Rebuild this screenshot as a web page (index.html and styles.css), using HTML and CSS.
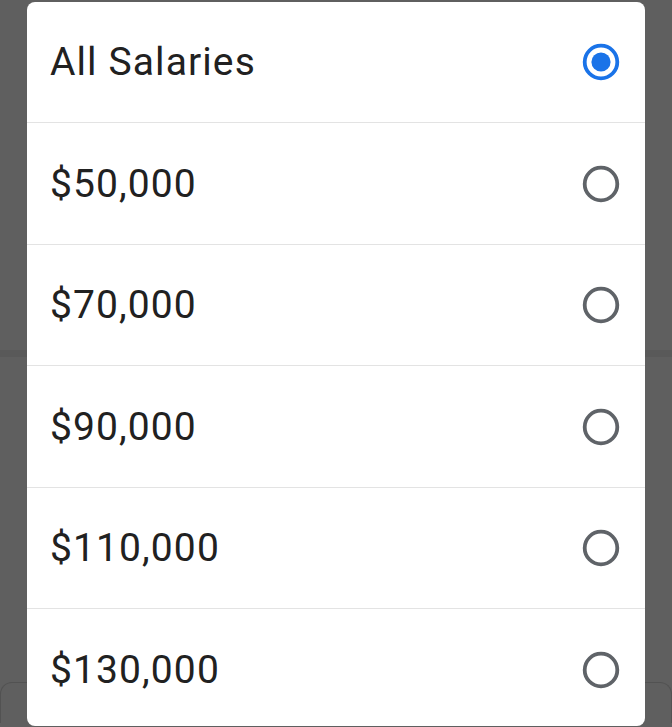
FILE: index.html
```html
<!DOCTYPE html>
<html lang="en">
<head>
<meta charset="utf-8">
<title>Salary filter</title>
<link rel="stylesheet" href="styles.css">
</head>
<body>
<div class="page">
  <div class="band"></div>
  <div class="field"></div>
</div>
<div class="dialog" role="radiogroup">
  <div class="row">
    <span class="label">All Salaries</span>
    <svg class="radio" viewBox="0 0 40 40" width="40" height="40"><circle cx="20" cy="20" r="16.3" fill="none" stroke="#1a73e8" stroke-width="3.8"/><circle cx="20" cy="20" r="9.6" fill="#1a73e8"/></svg>
  </div>
  <div class="row">
    <span class="label">$50,000</span>
    <svg class="radio" viewBox="0 0 40 40" width="40" height="40"><circle cx="20" cy="20" r="16.3" fill="none" stroke="#5f6368" stroke-width="3.8"/></svg>
  </div>
  <div class="row">
    <span class="label">$70,000</span>
    <svg class="radio" viewBox="0 0 40 40" width="40" height="40"><circle cx="20" cy="20" r="16.3" fill="none" stroke="#5f6368" stroke-width="3.8"/></svg>
  </div>
  <div class="row">
    <span class="label">$90,000</span>
    <svg class="radio" viewBox="0 0 40 40" width="40" height="40"><circle cx="20" cy="20" r="16.3" fill="none" stroke="#5f6368" stroke-width="3.8"/></svg>
  </div>
  <div class="row">
    <span class="label">$110,000</span>
    <svg class="radio" viewBox="0 0 40 40" width="40" height="40"><circle cx="20" cy="20" r="16.3" fill="none" stroke="#5f6368" stroke-width="3.8"/></svg>
  </div>
  <div class="row">
    <span class="label">$130,000</span>
    <svg class="radio" viewBox="0 0 40 40" width="40" height="40"><circle cx="20" cy="20" r="16.3" fill="none" stroke="#5f6368" stroke-width="3.8"/></svg>
  </div>
</div>
</body>
</html>
```

FILE: styles.css
```css
html, body {
  margin: 0;
  padding: 0;
  height: 100%;
  overflow: hidden;
}
body {
  background: #5f5f5f;
  font-family: Roboto, "Liberation Sans", sans-serif;
}
.page {
  padding-top: 350px;
}
.band {
  height: 7px;
  background: #595959;
}
.field {
  margin-top: 325px;
  height: 40px;
  border: 1.5px solid #525252;
  border-bottom: none;
  border-radius: 12px 12px 0 0;
}
.dialog {
  position: absolute;
  left: 27px;
  top: 2px;
  width: 618px;
  height: 724px;
  background: #ffffff;
  border-radius: 8px;
  overflow: hidden;
}
.row {
  display: flex;
  align-items: center;
  justify-content: space-between;
  height: 120px;
  margin-bottom: 0.5px;
  padding: 0 24px 0 23px;
  border-bottom: 1px solid #e3e3e3;
}
.label {
  font-size: 39px;
  color: #212121;
  letter-spacing: 1.1px;
}
.radio {
  display: block;
  flex: none;
}
```
